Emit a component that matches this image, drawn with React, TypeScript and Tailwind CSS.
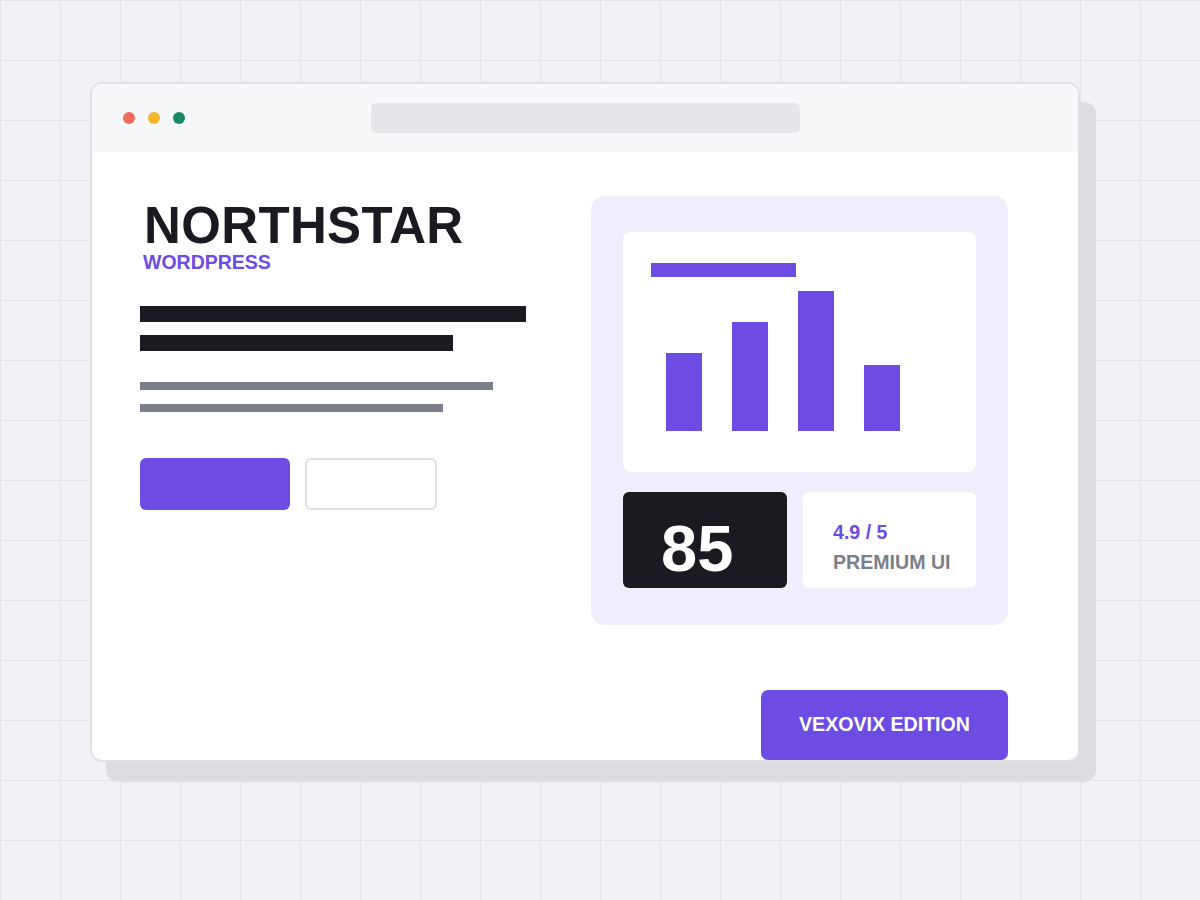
const bars = [78, 109, 140, 66]

function TrafficLights() {
  return (
    <div className="flex items-center gap-[13px]">
      <span className="block h-[12px] w-[12px] rounded-full bg-[#f26b5b]" />
      <span className="block h-[12px] w-[12px] rounded-full bg-[#f2b62b]" />
      <span className="block h-[12px] w-[12px] rounded-full bg-[#158a64]" />
    </div>
  )
}

function HeroCopy() {
  return (
    <div className="flex flex-col pt-[4px]">
      <h1 className="ml-[4px] text-[51px] leading-[51px] font-bold tracking-[0.35px] text-[#1a1b20]">NORTHSTAR</h1>
      <div className="ml-[3px] mt-[2px] text-[19.5px] leading-[19.5px] font-bold text-[#6d4ce3]">WORDPRESS</div>

      <div className="mt-[33.5px] h-[16px] w-[386px] bg-[#1a1b20]" />
      <div className="mt-[13px] h-[16px] w-[313px] bg-[#1a1b20]" />

      <div className="mt-[31px] h-[8px] w-[353px] bg-[#7b7f8a]" />
      <div className="mt-[14px] h-[8px] w-[303px] bg-[#7b7f8a]" />

      <div className="mt-[46px] flex gap-[15px]">
        <div className="h-[52px] w-[150px] rounded-[6px] bg-[#6d4ce3]" />
        <div className="h-[52px] w-[132px] rounded-[6px] border-2 border-[#dcdfe5] bg-white" />
      </div>
    </div>
  )
}

function StatsPanel() {
  return (
    <div className="flex h-[429px] w-[417px] flex-col rounded-[14px] bg-[#f0eefc] px-[32px] pt-[36px]">
      <div className="flex h-[240px] flex-col rounded-[8px] bg-white">
        <div className="ml-[28px] mt-[31px] h-[14px] w-[145px] bg-[#6d4ce3]" />
        <div className="ml-[43px] flex h-[154px] items-end gap-[30px]">
          {bars.map((h, i) => (
            <div key={i} className="w-[36px] bg-[#6d4ce3]" style={{ height: h }} />
          ))}
        </div>
      </div>

      <div className="mt-[20px] flex gap-[16px]">
        <div className="h-[96px] w-[164px] rounded-[6px] bg-[#1a1b20] pl-[38px] pt-[24px]">
          <span className="block text-[65px] leading-[65px] font-bold text-white">85</span>
        </div>
        <div className="h-[96px] w-[173px] rounded-[6px] bg-white pl-[30px] pt-[25px] text-[19.6px] leading-[30px] font-bold">
          <div className="text-[#6d4ce3]">4.9 / 5</div>
          <div className="text-[#7b7f8a]">PREMIUM UI</div>
        </div>
      </div>
    </div>
  )
}

export default function App() {
  return (
    <div
      className="h-[900px] w-full bg-[#f1f2f6] bg-[linear-gradient(to_right,#e3e4e9_1px,transparent_1px),linear-gradient(to_bottom,#e3e4e9_1px,transparent_1px)] bg-[size:60px_60px] pl-[90px] pt-[82px]"
      style={{ fontFamily: '"Liberation Sans", Arial, sans-serif' }}
    >
      <div className="h-[680px] w-[990px] overflow-hidden rounded-[12px] border-2 border-[#dfe1e6] bg-white shadow-[16px_20px_0_0_#dcdde1]">
        {/* window chrome */}
        <div className="flex h-[68px] items-center bg-[#f7f8fa] pl-[30.5px]">
          <TrafficLights />
          <div className="ml-[186px] h-[30px] w-[429px] rounded-[5px] bg-[#e6e7eb]" />
        </div>

        <div className="flex h-[608px] flex-col pl-[48px] pr-[70px] pt-[44px]">
          <div className="flex items-start justify-between">
            <HeroCopy />
            <StatsPanel />
          </div>
          <div className="mt-[65px] flex h-[70px] w-[247px] items-center justify-center self-end rounded-[7px] bg-[#6d4ce3] text-[19.6px] font-bold text-white">
            VEXOVIX EDITION
          </div>
        </div>
      </div>
    </div>
  )
}
